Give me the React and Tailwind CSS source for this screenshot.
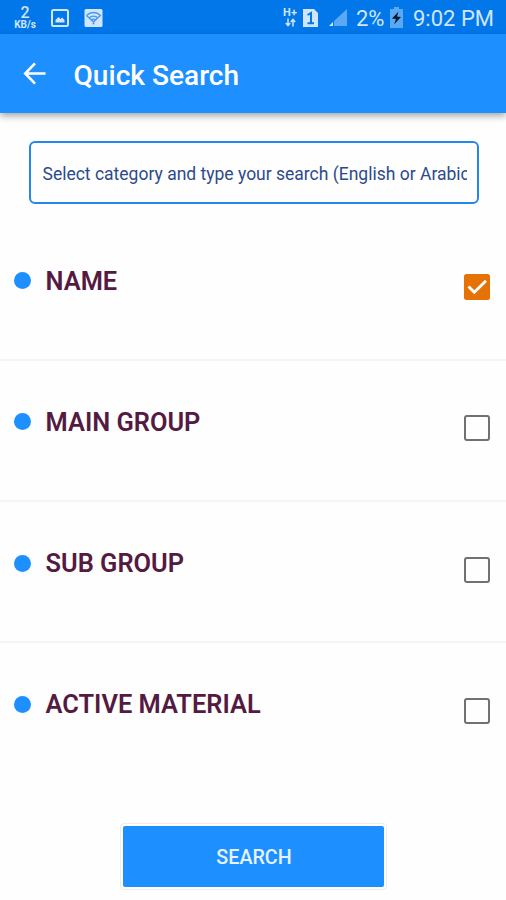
const categories = [
  { name: 'NAME', checked: true },
  { name: 'MAIN GROUP', checked: false },
  { name: 'SUB GROUP', checked: false },
  { name: 'ACTIVE MATERIAL', checked: false },
];

function StatusBar() {
  return (
    <div className="flex h-[34px] items-center bg-[#0277ea] text-[#cfe6fd]">
      <div className="ml-[14px] flex w-[22px] flex-col items-center">
        <span className="text-[16px] font-medium leading-[15px]">2</span>
        <span className="text-[10px] font-bold leading-[10px]">KB/s</span>
      </div>
      <svg className="ml-[15px] mt-[1px] h-[18px] w-[18px]" viewBox="0 0 18 18">
        <rect x="1" y="1" width="16" height="16" rx="1.5" fill="none" stroke="currentColor" strokeWidth="2" />
        <path d="M4.5 13.5V11l3-3 2 2 1.5-1.5 2.5 2.5v2.5z" fill="currentColor" />
      </svg>
      <svg className="ml-[15px] mt-[1px] h-[18px] w-[19px]" viewBox="0 0 19 18">
        <rect x="0.5" width="18" height="18" rx="1.5" fill="currentColor" />
        <g fill="none" stroke="#4a98e8" strokeWidth="1.3">
          <path d="M2.5 6.5c4-4 10-4 14 0l-3.5 3M5 9c2.5-2.5 6.5-2.5 9 0M7 11.5c1.5-1.5 3.5-1.5 5 0M2.5 6.5l7 6.5 3.5-3.5" />
        </g>
        <circle cx="9.5" cy="14.5" r="1" fill="#4a98e8" />
      </svg>
      <div className="ml-auto flex w-[16px] flex-col items-center">
        <span className="text-[11px] font-bold leading-[11px]">H+</span>
        <svg className="h-[9px] w-[11px]" viewBox="0 0 11 9" fill="none" stroke="currentColor" strokeWidth="1.5">
          <path d="M3 0.5v7M0.8 5L3 7.5 5.2 5M8 8.5v-7M5.8 4L8 1.5 10.2 4" />
        </svg>
      </div>
      <svg className="ml-[5px] mt-[1px] h-[20px] w-[15px]" viewBox="0 0 15 20">
        <path d="M0 1h11l4 4v14H0z" fill="currentColor" />
        <path d="M4.5 7l3.5-2v10M4.5 15.2h6.5" fill="none" stroke="#0277ea" strokeWidth="2" />
      </svg>
      <svg className="ml-[11px] mt-[1px] h-[19px] w-[19px]" viewBox="0 0 19 19">
        <path d="M18 1v17H5v-5z" fill="#5aa9f6" />
        <path d="M4 14v4H0z" fill="currentColor" />
      </svg>
      <span className="ml-[8px] mt-[3px] w-[29px] whitespace-nowrap text-[22px] leading-none">2%</span>
      <svg className="ml-[4px] h-[21px] w-[15px]" viewBox="0 0 15 21">
        <path d="M1 2h4V0h5v2h4v19H1z" fill="#5aa9f6" />
        <path d="M9.5 4.5L3 11.5l4 .5-2 5.5 7-7.5-4-.5z" fill="#061a30" />
      </svg>
      <span className="ml-[9px] mr-[11px] mt-[3px] w-[82px] whitespace-nowrap text-[22px] leading-none">9:02 PM</span>
    </div>
  );
}

function Checkbox({ checked }) {
  if (checked) {
    return (
      <svg className="h-[26px] w-[26px]" viewBox="0 0 26 26">
        <rect width="26" height="26" rx="2.5" fill="#e57206" />
        <path d="M4.5 12.5l5.8 5.8L22 6.700" fill="none" stroke="#fff" strokeWidth="2.8" />
      </svg>
    );
  }
  return <div className="h-[26px] w-[26px] rounded-[3px] border-[2.5px] border-[#717171]" />;
}

function CategoryRow({ name, checked, last }) {
  return (
    <div className={last ? 'flex h-[141px] px-[14px]' : 'flex h-[141.3px] border-b-2 border-[#f5f5f5] px-[14px]'}>
      <div className="mt-[52.5px] h-[17px] w-[17px] rounded-full bg-[#1e8fff]" />
      <span className="ml-[14.5px] mt-[45px] whitespace-nowrap text-[25.4px] font-semibold leading-[32px] text-[#551a42]">
        {name}
      </span>
      <div className="ml-auto mr-[2px] mt-[54.6px]">
        <Checkbox checked={checked} />
      </div>
    </div>
  );
}

function App() {
  return (
    <div className="flex h-[900px] w-[506px] flex-col overflow-hidden bg-[#fefefe] font-['Roboto',sans-serif]">
      <StatusBar />
      <header className="flex h-[79px] items-center bg-[#1e8fff] text-white shadow-[0_3px_7px_rgba(0,0,0,0.35)]">
        <svg className="ml-[23px] h-[23px] w-[24px]" viewBox="0 0 24 24" fill="none" stroke="currentColor" strokeWidth="2.7">
          <path d="M23 12H2M12 1.5L1.8 12 12 22.5" />
        </svg>
        <h1 className="ml-[26.5px] mt-[4px] whitespace-nowrap text-[28.1px] font-medium leading-[32px]">Quick Search</h1>
      </header>
      <div className="ml-[28.5px] mr-[27.5px] mt-[28px] flex h-[63px] items-center rounded-[6px] border-[2.5px] border-[#2586ee] pl-[12px] pr-[10px]">
        <div className="w-full overflow-hidden whitespace-nowrap pt-[2px] text-[17.5px] leading-[24px] text-[#2d4a8c]">
          Select category and type your search (English or Arabic
        </div>
      </div>
      <div className="mt-[15.5px]">
        {categories.map((c, i) => (
          <CategoryRow key={c.name} name={c.name} checked={c.checked} last={i === categories.length - 1} />
        ))}
      </div>
      <button className="mx-auto mt-[38.5px] h-[67px] w-[267px] rounded-[4px] border border-[#ededf0] bg-white p-[2px]">
        <span className="flex h-full items-center justify-center rounded-[2px] bg-[#1e8fff] pl-[2px] pt-[3px] text-[19.7px] font-medium text-[#e4f3ff]">
          SEARCH
        </span>
      </button>
    </div>
  );
}

export default App;
